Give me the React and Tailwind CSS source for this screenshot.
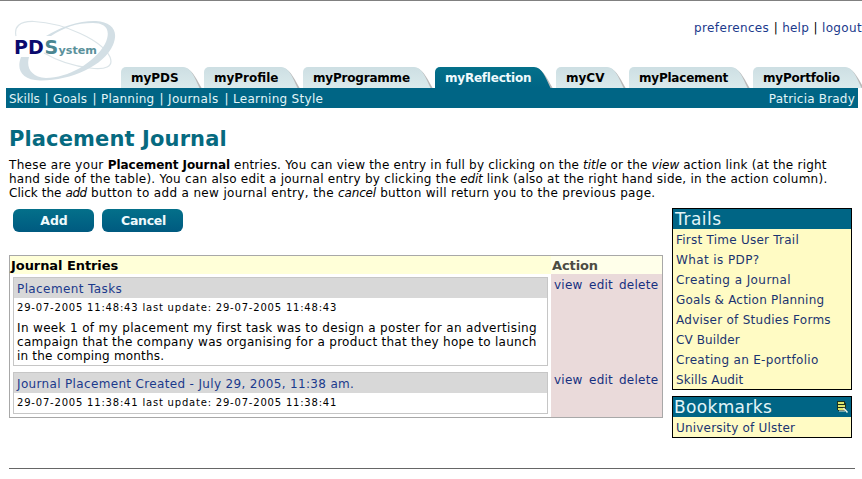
import React from "react";

const Tab = ({ label, w, tw = "", active, mr = "" }) => (
  <a className={`relative flex h-[21px] shrink-0 items-start pl-[10px] ${w} ${mr}`}>
    <TabShape active={active} />
    <span className={`relative text-[12px] font-bold leading-[22px] ${tw} ${active ? "text-[#effafd]" : "text-black"}`}>{label}</span>
  </a>
);

const TabShape = ({ active }) => (
  <span className="absolute inset-0 flex">
    <span className={`flex-1 rounded-tl-[5px] ${active ? "bg-linear-to-b from-[#04708a] to-[#006585]" : "bg-linear-to-b from-[#cddfe3] to-[#dbeaec]"}`} />
    <svg className="h-[21px] w-[24px] shrink-0" viewBox="0 0 24 21">
      <defs>
        <linearGradient id="tabFill" x1="0" y1="0" x2="0" y2="1">
          <stop offset="0" stopColor="#cddfe3" />
          <stop offset="1" stopColor="#dbeaec" />
        </linearGradient>
        <linearGradient id="tabActive" x1="0" y1="0" x2="0" y2="1">
          <stop offset="0" stopColor="#04708a" />
          <stop offset="1" stopColor="#006585" />
        </linearGradient>
      </defs>
      <path d="M0 0.8H6C13 1.5 17 9 23.6 21H0Z" fill="#a3a3a3" opacity="0.75" />
      <path d="M0 0H5C13 0.5 16 9 21.5 21H0Z" fill={active ? "url(#tabActive)" : "url(#tabFill)"} />
    </svg>
  </span>
);

const Logo = () => (
  <svg className="h-[66px] w-[104px]" viewBox="0 0 104 66">
    <path d="M2 18C0 9 5 3 20 3.500C50 5 88 22 96 39C100 49 91 52 76 50C58 48 42 42 30 35" fill="none" stroke="#dbe4e8" strokeWidth="1.200" />
    <path d="M32 18C48 8 66 2.500 82 3C98 4 105 13 99 27C90 48 56 63 26 62.500C8 62 2 52 7 39H15C12 50 17 59 32 60C54 60 80 45 91 26C98 11 91 5 79 5C62 5 50 9.500 37 18Z" fill="#d3dfe5" />
    <g fontFamily="DejaVu Sans, Verdana, sans-serif" fontWeight="700">
      <text x="0" y="36" fontSize="19" fill="#0a0a6e">PD</text>
      <text x="30.500" y="36" fontSize="19" fill="#4b8691">S</text>
      <text x="44.500" y="36" fontSize="11" fill="#5b919b" textLength="38.500" lengthAdjust="spacingAndGlyphs">ystem</text>
    </g>
  </svg>
);

const Entry = ({ title, titleClass, stamp, children, className = "" }) => (
  <div className={`border border-[#c6c6c6] bg-white ${className}`}>
    <div className="h-[20px] bg-[#d8d8d8] pl-[3px] leading-[22px] text-[#1b3a8c]">
      <span className={titleClass}>{title}</span>
    </div>
    <div className="mt-[2px] pl-[3px] text-[10px] leading-[16px] tracking-[0.8px]">{stamp}</div>
    {children}
  </div>
);

const Actions = ({ className = "" }) => (
  <div className={`flex pl-[3px] leading-[22px] tracking-[0.25px] text-[#17307f] ${className}`}>
    <span className="w-[35px]">view</span>
    <span className="w-[30px]">edit</span>
    <span>delete</span>
  </div>
);

const BookmarkIcon = () => (
  <svg className="h-[12px] w-[11px]" viewBox="0 0 11 12">
    <path d="M0 0H8V2H9V10H1V9H0Z" fill="#1c3320" />
    <path d="M1 1H7V3H1ZM1 4H8V6H1ZM1 7H7V9H1Z" fill="#dbe66e" />
    <path d="M2 10H8" stroke="#e8eedc" strokeWidth="1" />
    <path d="M6.500 7L10.500 11.500" stroke="#f2f6e8" strokeWidth="1.500" />
  </svg>
);

const sections = [
  ["Skills", "w-[31px]"],
  ["Goals", "w-[35px] tracking-[0.1px]"],
  ["Planning", "w-[54px] tracking-[0.2px]"],
  ["Journals", "w-[52px] tracking-[0.35px]"],
];

const trails = [
  ["First Time User Trail", "tracking-[0.24px]"],
  ["What is PDP?", "tracking-[0.4px]"],
  ["Creating a Journal", "tracking-[0.42px]"],
  ["Goals & Action Planning", "tracking-[0.2px]"],
  ["Adviser of Studies Forms", "tracking-[0.26px]"],
  ["CV Builder", "tracking-[0.1px]"],
  ["Creating an E-portfolio", "tracking-[0.3px]"],
  ["Skills Audit", "tracking-[0.1px]"],
];

export default function App() {
  return (
    <div className="h-[479px] w-[862px] overflow-hidden whitespace-nowrap border-t border-[#808080] bg-white font-['DejaVu_Sans',Verdana,sans-serif] text-[12px] text-black">
      <header className="flex h-[87px] pl-[14px]">
        <div className="w-[107px] shrink-0 pt-[17px]"><Logo /></div>
        <div className="flex w-[741px] flex-col justify-between">
          <div className="flex justify-end pt-[16px] leading-[22px]">
            <span className="tracking-[0.36px] text-[#1b3a8c]">preferences</span>
            <span className="w-[13px] text-center">|</span>
            <span className="tracking-[0.2px] text-[#1b3a8c]">help</span>
            <span className="w-[13px] text-center">|</span>
            <span className="tracking-[0.35px] text-[#1b3a8c]">logout</span>
          </div>
          <nav className="flex overflow-hidden">
            <Tab label="myPDS" w="w-[81px]" mr="mr-[2px]" />
            <Tab label="myProfile" w="w-[96px]" mr="mr-[3px]" />
            <Tab label="myProgramme" w="w-[130px]" tw="tracking-[-0.2px]" mr="mr-[2px]" />
            <Tab label="myReflection" w="w-[118px]" tw="tracking-[-0.22px]" mr="mr-[3px]" active />
            <Tab label="myCV" w="w-[70px]" mr="mr-[3px]" />
            <Tab label="myPlacement" w="w-[121px]" tw="tracking-[-0.22px]" mr="mr-[3px]" />
            <Tab label="myPortfolio" w="w-[111px]" tw="tracking-[-0.2px]" />
          </nav>
        </div>
      </header>
      <div className="ml-[6px] flex h-[20px] w-[852px] justify-between bg-[#006585] px-[3px] leading-[22px] text-[#e2f5f8]">
        <div className="flex">
          {sections.map(([label, c]) => (
            <React.Fragment key={label}>
              <span className={c}>{label}</span>
              <span className="w-[13px] text-center">|</span>
            </React.Fragment>
          ))}
          <span className="tracking-[0.3px]">Learning Style</span>
        </div>
        <span className="tracking-[0.2px]">Patricia Brady</span>
      </div>
      <h1 className="ml-[9px] mt-[17px] text-[21px] font-bold leading-[28px] tracking-[0.12px] text-[#066a80]">Placement Journal</h1>
      <div className="ml-[9px] mt-[5px] leading-[14px]">
        <p>
          <span className="tracking-[0.33px]">These are your </span>
          <b className="tracking-[-0.06px]">Placement Journal</b>
          <span className="tracking-[0.21px]"> entries. You can view the entry in full by clicking on the </span>
          <i>title</i>
          <span className="tracking-[0.2px]"> or the </span>
          <i>view</i>
          <span className="tracking-[0.22px]"> action link (at the right</span>
        </p>
        <p>
          <span className="tracking-[0.26px]">hand side of the table). You can also edit a journal entry by clicking the </span>
          <i className="tracking-[-0.2px]">edit</i>
          <span className="tracking-[0.24px]"> link (also at the right hand side, in the action column).</span>
        </p>
        <p>
          <span className="tracking-[0.05px]">Click the </span>
          <i className="tracking-[-0.4px]">add</i>
          <span className="tracking-[0.35px]"> button to add a new journal entry, the </span>
          <i className="tracking-[-0.15px]">cancel</i>
          <span className="tracking-[0.31px]"> button will return you to the previous page.</span>
        </p>
      </div>
      <div className="flex items-start">
        <main className="ml-[9px] mt-[9px] w-[654px]">
          <div className="ml-[4px] flex gap-[8px] text-[12.5px] font-bold leading-[23px] text-[#effafd]">
            <button className="h-[23px] w-[81px] rounded-[6px] bg-linear-to-b from-[#04708a] to-[#005a80] pl-px">Add</button>
            <button className="h-[23px] w-[81px] rounded-[6px] bg-linear-to-b from-[#04708a] to-[#005a80] pl-[2px] tracking-[-0.3px]">Cancel</button>
          </div>
          <div className="mt-[23px] flex h-[163px] border border-[#a8a8a8]">
            <section className="w-[541px]">
              <div className="h-[18px] bg-[#ffffd8] pl-px text-[13px] font-bold leading-[20px] tracking-[-0.07px]">Journal Entries</div>
              <Entry className="ml-[3px] mt-[3px] h-[89px] w-[535px]" title="Placement Tasks" titleClass="tracking-[0.4px]" stamp="29-07-2005 11:48:43 last update: 29-07-2005 11:48:43">
                <div className="mt-[5px] pl-[3px] leading-[14px]">
                  <p className="tracking-[0.34px]">In week 1 of my placement my first task was to design a poster for an advertising</p>
                  <p className="tracking-[0.28px]">campaign that the company was organising for a product that they hope to launch</p>
                  <p className="tracking-[0.2px]">in the comping months.</p>
                </div>
              </Entry>
              <Entry className="ml-[3px] mt-[6px] h-[42px] w-[535px]" title="Journal Placement Created - July 29, 2005, 11:38 am." titleClass="tracking-[0.34px]" stamp="29-07-2005 11:38:41 last update: 29-07-2005 11:38:41" />
            </section>
            <section className="w-[111px] bg-[#eadada]">
              <div className="h-[18px] bg-[#ffffea] pl-px text-[13px] font-bold leading-[20px] tracking-[-0.1px] text-[#4c4c44]">Action</div>
              <Actions className="h-[95px]" />
              <Actions />
            </section>
          </div>
        </main>
        <aside className="ml-[9px] mt-[8px] w-[180px] text-[#1b3470]">
          <div className="h-[182px] border border-black bg-[#fffbc4]">
            <h2 className="h-[20px] bg-[#006585] pl-[2px] text-[17px] leading-[21px] tracking-[0.5px] text-[#e2f5f8]">Trails</h2>
            {trails.map(([t, c]) => (
              <div key={t} className="h-[20px] pl-[3px] leading-[22px]"><span className={c}>{t}</span></div>
            ))}
          </div>
          <div className="mt-[6px] h-[42px] border border-black bg-[#fffbc4]">
            <h2 className="flex h-[20px] items-center justify-between bg-[#006585] pl-px pr-[3px] text-[17px] leading-[21px] tracking-[0.35px] text-[#e2f5f8]"><span>Bookmarks</span><BookmarkIcon /></h2>
            <div className="h-[20px] pl-[3px] leading-[22px] tracking-[0.2px]">University of Ulster</div>
          </div>
        </aside>
      </div>
      <div className="ml-[9px] mt-[30px] h-px w-[846px] bg-[#666]" />
    </div>
  );
}
